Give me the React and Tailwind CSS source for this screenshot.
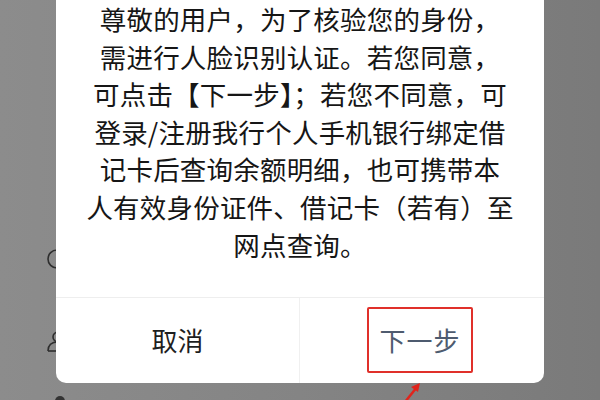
import React from "react";

const lines = [
  "尊敬的用户，为了核验您的身份，",
  "需进行人脸识别认证。若您同意，",
  "可点击【下一步】；若您不同意，可",
  "登录/注册我行个人手机银行绑定借",
  "记卡后查询余额明细，也可携带本",
  "人有效身份证件、借记卡（若有）至",
  "网点查询。",
];

export default function App() {
  const font = { fontFamily: '"Noto Sans CJK SC", "Noto Sans", sans-serif' };
  return (
    <div
      className="relative w-[600px] h-[400px] overflow-hidden bg-gradient-to-r from-[#8c8c8c] via-[#848484] to-[#7a7a7a]"
      style={font}
    >
      {/* page content behind the overlay */}
      <div className="flex flex-col pl-[46px] pt-[248px] gap-[60px]">
        <svg width="22" height="22" viewBox="0 0 22 22" fill="none" stroke="#2e2e2e" strokeWidth="1.6">
          <circle cx="11" cy="11" r="9" />
        </svg>
        <svg width="22" height="22" viewBox="0 0 22 22" fill="none" stroke="#2e2e2e" strokeWidth="1.6">
          <circle cx="12" cy="7" r="5" />
          <path d="M2 21 C2 15 6 12 12 12" />
          <path d="M2 21 H14" />
        </svg>
        <div className="flex items-center -mt-[16px] pl-[9px]">
          <div className="w-[10px] h-[10px] rounded-full bg-[#333]" />
        </div>
      </div>

      {/* dialog */}
      <div className="absolute left-[56px] top-[-10px] w-[488px] h-[393px] bg-white rounded-[10px] flex flex-col">
        <div className="h-[307px] pt-[10px] flex flex-col items-center text-[26.5px] leading-[37.6px] text-[#161616] tracking-[0.2px]">
          {lines.map((l, i) => (
            <div key={i} className="whitespace-nowrap">{l}</div>
          ))}
        </div>
        <div className="flex-1 grid grid-cols-2 border-t border-[#eeeeee]">
          <div className="flex items-center justify-center border-r border-[#f0f0f0] text-[26px] text-[#1e1e1e] pb-[2px]">
            取消
          </div>
          <div className="flex items-center justify-center pb-[2px] pr-[4px]">
            <div className="w-[106px] h-[66px] border-2 border-[#e0302a] rounded-[2px] flex items-center justify-center text-[26px] text-[#4e5b6f] tracking-[1px]">
              下一步
            </div>
          </div>
        </div>
      </div>

      {/* annotation arrow */}
      <svg className="absolute left-[396px] top-[380px]" width="30" height="22" viewBox="0 0 30 22">
        <path d="M9 22 L21 7" stroke="#e0241c" strokeWidth="2.5" fill="none" />
        <path d="M24 3 L15 7 L22 12 Z" fill="#e0241c" />
      </svg>
    </div>
  );
}
